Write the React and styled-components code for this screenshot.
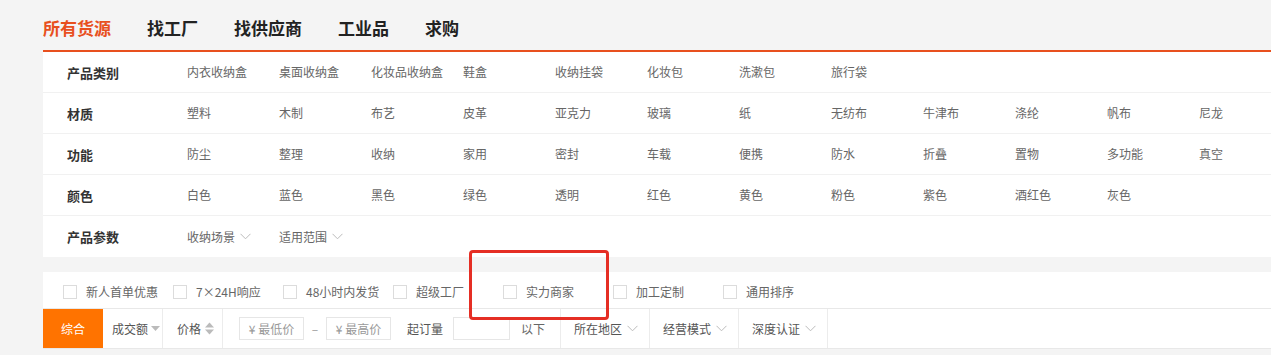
import React from 'react';
import styled, { createGlobalStyle } from 'styled-components';

const GlobalStyle = createGlobalStyle`
  html, body { margin: 0; padding: 0; background: #f4f4f4; }
  body { font-family: "Noto Sans CJK SC", "Noto Sans", sans-serif; color: #333; }
  * { box-sizing: border-box; }
`;

const Page = styled.div`
  position: relative;
  padding-left: 43px;
  height: 355px;
  overflow: hidden;
`;

const TabBar = styled.nav`
  display: flex;
  align-items: center;
  gap: 36px;
  height: 52px;
  padding-top: 4px;
  border-bottom: 2px solid #e8501e;
`;

const Tab = styled.a`
  font-size: 17px;
  font-weight: 700;
  line-height: 1;
  color: ${p => (p.$active ? '#e8501e' : '#222')};
  cursor: pointer;
`;

const Panel = styled.section`
  background: #fff;
`;

const Row = styled.div`
  display: grid;
  grid-template-columns: 120px repeat(12, 92px);
  align-items: center;
  height: 41px;
  padding-left: 24px;
  border-bottom: 1px solid #f1f1f1;
  &:last-child { border-bottom: none; }
`;

const Label = styled.div`
  font-size: 13px;
  font-weight: 700;
  color: #333;
  line-height: 1;
`;

const Item = styled.a`
  display: flex;
  align-items: center;
  gap: 5px;
  font-size: 12px;
  color: #666;
  line-height: 1;
  white-space: nowrap;
  cursor: pointer;
`;

const CheckRow = styled.div`
  display: flex;
  align-items: center;
  margin-top: 15px;
  height: 37px;
  padding: 3px 0 0 20px;
  background: #fff;
  border-bottom: 1px solid #e8e8e8;
`;

const CheckItem = styled.label`
  display: flex;
  align-items: center;
  gap: 9px;
  width: 110px;
  font-size: 12px;
  color: #666;
  line-height: 1;
  white-space: nowrap;
`;

const Box = styled.span`
  width: 14px;
  height: 14px;
  border: 1px solid #dcdcdc;
  background: #fff;
  flex: none;
`;

const SortBar = styled.div`
  display: flex;
  align-items: stretch;
  height: 40px;
  background: #fff;
  border-bottom: 1px solid #e8e8e8;
`;

const SortCell = styled.div`
  display: flex;
  align-items: center;
  justify-content: ${p => (p.$left ? 'flex-start' : 'center')};
  gap: ${p => p.$gap || 3}px;
  width: ${p => p.$w}px;
  padding-left: ${p => p.$pl || 0}px;
  border-right: ${p => (p.$active ? 'none' : '1px solid #ececec')};
  background: ${p => (p.$active ? '#ff7300' : '#fff')};
  color: ${p => (p.$active ? '#fff' : '#555')};
  font-size: 12px;
  line-height: 1;
  white-space: nowrap;
  cursor: pointer;
`;

const PriceGroup = styled.div`
  display: flex;
  align-items: center;
  width: 338px;
  padding-left: 16px;
  border-right: 1px solid #ececec;
  font-size: 12px;
  line-height: 1;
`;

const PriceBox = styled.div`
  display: flex;
  align-items: center;
  justify-content: center;
  width: ${p => p.$w || 65}px;
  height: 23px;
  margin-left: ${p => p.$ml || 0}px;
  border: 1px solid #e6e6e6;
  color: #999;
  font-size: 12px;
`;

const Dash = styled.span`
  width: 22px;
  text-align: center;
  color: #999;
`;

const PlainText = styled.span`
  margin-left: ${p => p.$ml || 0}px;
  color: ${p => p.$c || '#555'};
  white-space: nowrap;
`;

const Annotation = styled.div`
  position: absolute;
  left: 469px;
  top: 250px;
  width: 140px;
  height: 70px;
  border: 3px solid #e52e24;
  border-radius: 4px;
  pointer-events: none;
`;

const Chevron = () => (
  <svg width="11" height="7" viewBox="0 0 11 7" fill="none">
    <path d="M0.5 0.8 L5.5 5.8 L10.5 0.8" stroke="#bbb" strokeWidth="1" />
  </svg>
);

const TriDown = () => (
  <svg width="9" height="6" viewBox="0 0 9 6">
    <path d="M0 0 H9 L4.5 5 Z" fill="#bbb" />
  </svg>
);

const TriUpDown = () => (
  <svg width="9" height="13" viewBox="0 0 9 13">
    <path d="M0 5.5 H9 L4.5 0.5 Z" fill="#bbb" />
    <path d="M0 7.5 H9 L4.5 12.5 Z" fill="#bbb" />
  </svg>
);

const tabs = ['所有货源', '找工厂', '找供应商', '工业品', '求购'];

const rows = [
  ['产品类别', ['内衣收纳盒', '桌面收纳盒', '化妆品收纳盒', '鞋盒', '收纳挂袋', '化妆包', '洗漱包', '旅行袋']],
  ['材质', ['塑料', '木制', '布艺', '皮革', '亚克力', '玻璃', '纸', '无纺布', '牛津布', '涤纶', '帆布', '尼龙']],
  ['功能', ['防尘', '整理', '收纳', '家用', '密封', '车载', '便携', '防水', '折叠', '置物', '多功能', '真空']],
  ['颜色', ['白色', '蓝色', '黑色', '绿色', '透明', '红色', '黄色', '粉色', '紫色', '酒红色', '灰色']],
];

const params = ['收纳场景', '适用范围'];

const checks = ['新人首单优惠', '7×24H响应', '48小时内发货', '超级工厂', '实力商家', '加工定制', '通用排序'];

const drops = ['所在地区', '经营模式', '深度认证'];

export default function App() {
  return (
    <>
      <GlobalStyle />
      <Page>
        <TabBar>
          {tabs.map((t, i) => (
            <Tab key={t} $active={i === 0}>{t}</Tab>
          ))}
        </TabBar>

        <Panel>
          {rows.map(([label, items]) => (
            <Row key={label}>
              <Label>{label}</Label>
              {items.map(it => (
                <Item key={it}>{it}</Item>
              ))}
            </Row>
          ))}
          <Row>
            <Label>产品参数</Label>
            {params.map(p => (
              <Item key={p}>{p}<Chevron /></Item>
            ))}
          </Row>
        </Panel>

        <CheckRow>
          {checks.map(c => (
            <CheckItem key={c}>
              <Box />
              {c}
            </CheckItem>
          ))}
        </CheckRow>

        <SortBar>
          <SortCell $w={60} $active>综合</SortCell>
          <SortCell $w={60} $left $pl={9}>成交额<TriDown /></SortCell>
          <SortCell $w={60} $left $pl={14} $gap={4}>价格<TriUpDown /></SortCell>
          <PriceGroup>
            <PriceBox>¥ 最低价</PriceBox>
            <Dash>–</Dash>
            <PriceBox>¥ 最高价</PriceBox>
            <PlainText $ml={16}>起订量</PlainText>
            <PriceBox $w={57} $ml={10} />
            <PlainText $ml={11} $c="#666">以下</PlainText>
          </PriceGroup>
          {drops.map(d => (
            <SortCell key={d} $w={89} $left $pl={13} $gap={5}>
              {d}<Chevron />
            </SortCell>
          ))}
        </SortBar>

        <Annotation />
      </Page>
    </>
  );
}
